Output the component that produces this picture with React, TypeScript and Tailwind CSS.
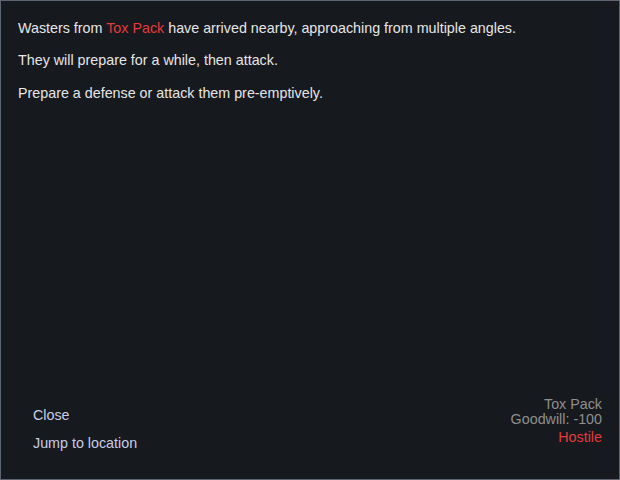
export default function App() {
  return (
    <div
      className="flex h-[480px] w-[620px] flex-col justify-between border border-[#5c6570] bg-[#16191e] text-[14.3px] text-[#e6e6e6]"
      style={{ fontFamily: '"Liberation Sans", Arial, sans-serif' }}
    >
      <div className="flex flex-col gap-[17px] px-[17px] pt-[19px]">
        <p className="leading-4">
          Wasters from <span className="text-[#e53b3b]">Tox Pack</span> have arrived nearby, approaching from multiple angles.
        </p>
        <p className="leading-[15px]">They will prepare for a while, then attack.</p>
        <p className="leading-4">Prepare a defense or attack them pre-emptively.</p>
      </div>

      <div className="flex items-end justify-between pb-[26px] pl-[32px] pr-[17px]">
        <div className="flex flex-col gap-[13px] pb-[2px] text-[#c7cde6]">
          <button className="text-left leading-4">Close</button>
          <button className="text-left leading-[15px]">Jump to location</button>
        </div>
        <div className="flex flex-col items-end pb-[6px] text-[#8f8f8f]">
          <span className="leading-4">Tox Pack</span>
          <span className="leading-[15px]">Goodwill: -100</span>
          <span className="leading-[20px] text-[#e53b3b]">Hostile</span>
        </div>
      </div>
    </div>
  );
}
